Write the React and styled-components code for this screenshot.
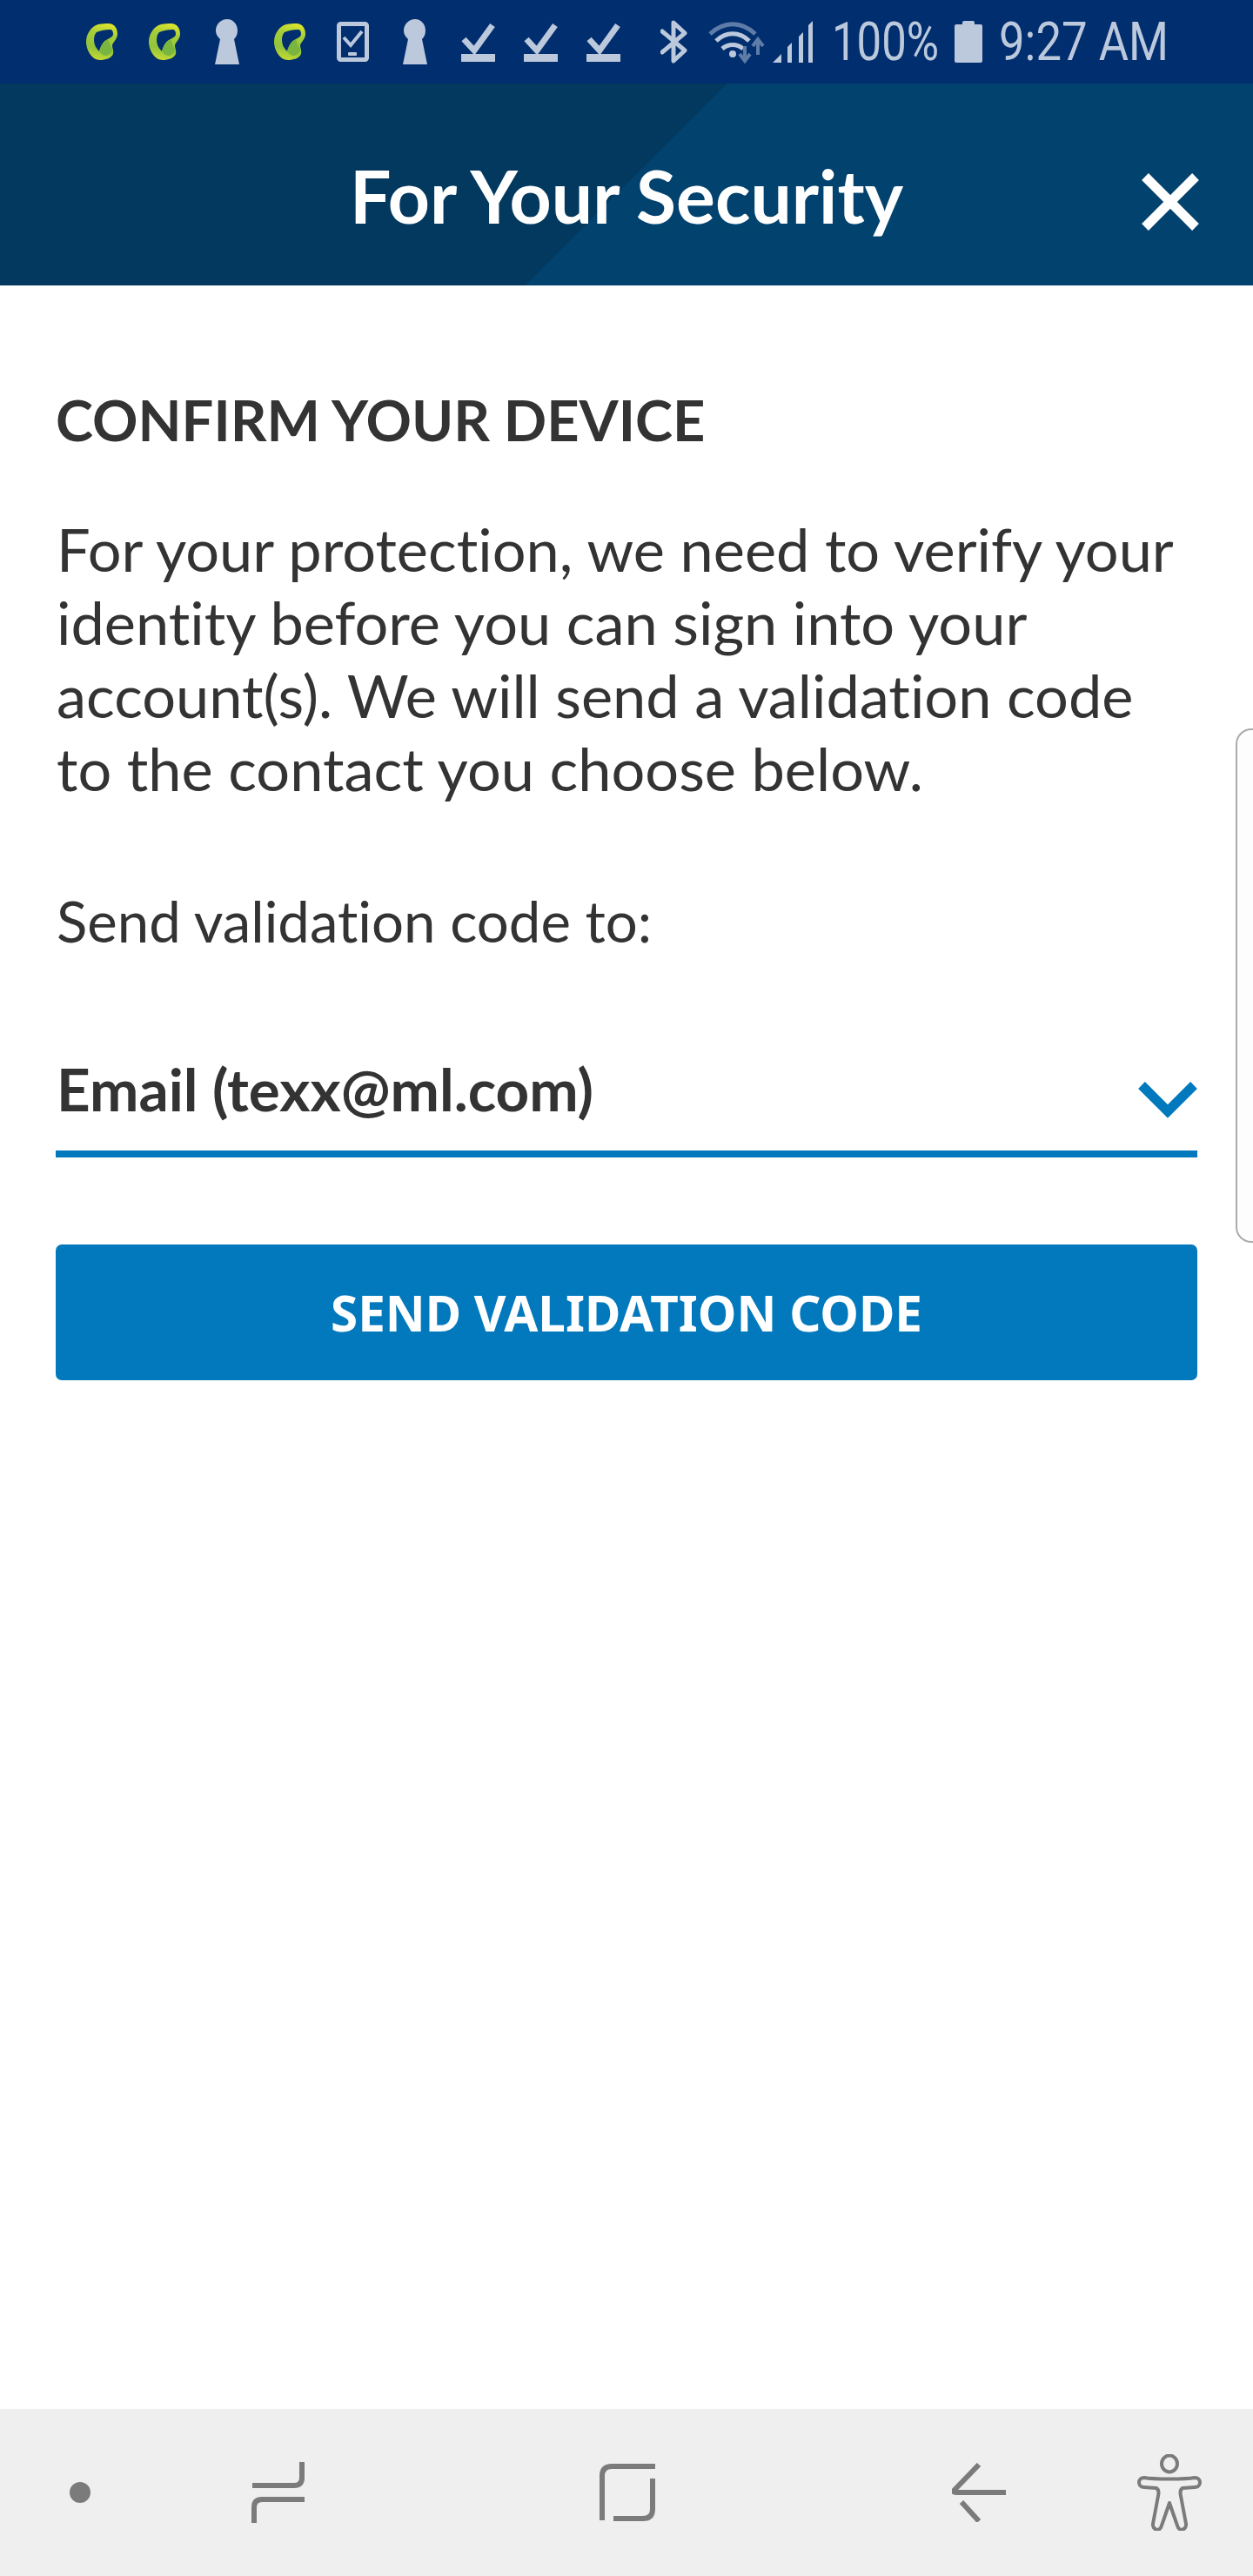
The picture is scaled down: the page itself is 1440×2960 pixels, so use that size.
import React from 'react';
import styled, { createGlobalStyle } from 'styled-components';

const GlobalStyle = createGlobalStyle`
  html, body {
    margin: 0;
    padding: 0;
    background: #ffffff;
  }
  * {
    box-sizing: border-box;
  }
`;

const Page = styled.div`
  position: relative;
  width: 1440px;
  height: 2960px;
  display: flex;
  flex-direction: column;
  background: #ffffff;
  font-family: Lato, 'Liberation Sans', sans-serif;
  font-variant-ligatures: none;
  color: #333333;
  overflow: hidden;
`;

const StatusBar = styled.div`
  height: 96px;
  flex: none;
  display: flex;
  justify-content: space-between;
  align-items: center;
  padding: 0 100px 0 81px;
  background: #012e6e;
  color: #bcc8dc;
`;

const NotificationIcons = styled.div`
  display: grid;
  grid-template-columns: repeat(9, 72px);
  align-items: center;
  justify-items: center;
`;

const SystemIcons = styled.div`
  display: flex;
  align-items: center;
`;

const BluetoothSvg = styled.svg`
  width: 31px;
  height: 50px;
  margin-right: 24px;
`;

const StatusText = styled.span`
  display: block;
  width: ${(p) => p.$width}px;
  margin: 0 ${(p) => p.$after || 0}px 0 ${(p) => p.$before || 0}px;
  font-family: Roboto, sans-serif;
  font-size: 62px;
  line-height: 62px;
  white-space: nowrap;
  transform: scaleX(${(p) => p.$squeeze});
  transform-origin: left center;
`;

const Header = styled.header`
  position: relative;
  height: 232px;
  flex: none;
  display: flex;
  align-items: center;
  justify-content: center;
  background: linear-gradient(135deg, #03395f 0, #03395f 591px, #02426e 591px);
`;

const Title = styled.h1`
  margin: 26px 0 0 0;
  font-size: 84px;
  line-height: 90px;
  font-weight: 700;
  color: #ffffff;
`;

const CloseButton = styled.button`
  position: absolute;
  right: 60px;
  top: 101px;
  width: 70px;
  height: 70px;
  padding: 0;
  border: 0;
  background: none;
`;

const Content = styled.main`
  flex: 1;
  padding: 118px 64px 0 64px;
`;

const Heading = styled.h2`
  margin: 0;
  font-size: 65px;
  line-height: 72px;
  font-weight: 700;
  color: #333333;
`;

const Paragraph = styled.p`
  margin: 71px 0 0 1px;
  font-size: 68.5px;
  line-height: 84px;
  font-weight: 400;
  color: #333333;
`;

const FieldLabel = styled.div`
  margin: 91px 0 0 1px;
  font-size: 65.3px;
  line-height: 84px;
  color: #333333;
`;

const SelectRow = styled.div`
  margin-top: 115px;
  height: 115px;
  display: flex;
  align-items: flex-start;
  justify-content: space-between;
  border-bottom: 8px solid #0279bd;
`;

const SelectValue = styled.span`
  margin-left: 1px;
  font-size: 67.4px;
  line-height: 72px;
  font-weight: 700;
  color: #333333;
`;

const Chevron = styled.svg`
  margin-top: 26px;
  width: 68px;
  height: 46px;
`;

const SendButton = styled.button`
  display: block;
  width: 100%;
  height: 156px;
  margin-top: 100px;
  padding: 0;
  border: 0;
  border-radius: 7px;
  background: #0279bd;
  color: #ffffff;
  font-family: 'Noto Sans', sans-serif;
  font-size: 56.5px;
  font-weight: 700;
  text-transform: uppercase;
`;

const NavBar = styled.nav`
  height: 192px;
  flex: none;
  display: grid;
  grid-template-columns: 184px 271px 532px 275px 163px;
  align-items: center;
  justify-items: center;
  background: #efefef;
  color: #7b7b7b;
`;

const EdgeHandle = styled.div`
  position: absolute;
  top: 837px;
  right: 0;
  width: 20px;
  height: 591px;
  border: 2px solid #ababab;
  border-right: 0;
  border-radius: 18px 0 0 18px;
  background: #fdfdfd;
`;

const LeafIcon = () => (
  <svg width="36" height="42" viewBox="0 0 36 42">
    <defs>
      <linearGradient id="leaf" x1="0.6" y1="0" x2="0.4" y2="1">
        <stop offset="0" stopColor="#dbe52d" />
        <stop offset="0.3" stopColor="#a5cd39" />
        <stop offset="0.7" stopColor="#93c43c" />
        <stop offset="1" stopColor="#c6db31" />
      </linearGradient>
    </defs>
    <path
      fill="url(#leaf)"
      fillRule="evenodd"
      d="M26 0C32 0 36 5 36 12C36 18 31 21 30 25C30 29 32 30 31 35C29 40 22 42 16 42C7 42 0 31 0 21C0 12 6 3 14 1C18 0 22 0 26 0ZM12 10C17 8 22 7 27 7C30 7 31 9 31 12C31 15 28 16 25 18C20 20 17 25 15 32C11 28 9 24 9 19C9 15 10 12 12 10Z"
    />
    <path fill="#79b53f" d="M15 32C17 25 20 20 25 18C27 23 28 27 30 29C30 33 27 36 23 37C20 37 17 35 15 32Z" />
  </svg>
);

const KeyholeIcon = () => (
  <svg width="28" height="52" viewBox="0 0 28 52">
    <path
      fill="currentColor"
      d="M14 0C21 0 26 6 26 13C26 18 24 21 22 23L28 52H0L6 23C4 21 1 18 1 13C1 6 7 0 14 0Z"
    />
  </svg>
);

const PhoneCheckIcon = () => (
  <svg width="37" height="46" viewBox="0 0 37 46">
    <rect x="2.5" y="2.5" width="32" height="41" rx="2" fill="none" stroke="currentColor" strokeWidth="5" />
    <path d="M8 18L16 27L29 11" fill="none" stroke="currentColor" strokeWidth="4" />
    <rect x="13" y="35" width="10" height="4" rx="1" fill="currentColor" />
  </svg>
);

const DownloadDoneIcon = () => (
  <svg width="39" height="46" viewBox="0 0 39 46">
    <path d="M3 20L15 33L36 4" fill="none" stroke="currentColor" strokeWidth="7" />
    <rect x="0" y="37" width="39" height="9" fill="currentColor" />
  </svg>
);

const BluetoothIcon = () => (
  <BluetoothSvg viewBox="0 0 31 50">
    <path
      d="M2 13L28 35L15 47V3L28 15L2 37"
      fill="none"
      stroke="currentColor"
      strokeWidth="5"
      strokeLinejoin="round"
      strokeLinecap="round"
    />
  </BluetoothSvg>
);

const WifiIcon = () => (
  <svg width="74" height="50" viewBox="0 0 74 50">
    <path d="M2 16C18 1 38 1 54 16" fill="none" stroke="#5f7ca8" strokeWidth="5" />
    <path d="M9 24C20 13 36 13 47 24" fill="none" stroke="currentColor" strokeWidth="5" />
    <path d="M16 33C23 27 33 27 40 33" fill="none" stroke="currentColor" strokeWidth="5" />
    <circle cx="28" cy="39" r="4" fill="currentColor" />
    <path d="M42 30V44M36 39L42 47L48 39" fill="none" stroke="#5f7ca8" strokeWidth="4" />
    <path d="M57 40V24M51 30L57 22L63 30" fill="none" stroke="#5f7ca8" strokeWidth="4" />
  </svg>
);

const SignalIcon = () => (
  <svg width="46" height="48" viewBox="0 0 46 48">
    <path fill="currentColor" d="M0 48L10 38V48Z" />
    <path fill="currentColor" d="M17 48V30L22 25V48Z" />
    <path fill="currentColor" d="M30 48V18L35 13V48Z" />
    <path fill="currentColor" d="M41 48V5L46 0V48Z" />
  </svg>
);

const BatteryIcon = () => (
  <svg width="32" height="48" viewBox="0 0 32 48">
    <path
      fill="currentColor"
      d="M9 2Q9 0 11 0H21Q23 0 23 2V4H30Q32 4 32 6V46Q32 48 30 48H2Q0 48 0 46V6Q0 4 2 4H9Z"
    />
  </svg>
);

const App = () => {
  return (
    <Page>
      <GlobalStyle />
      <StatusBar>
        <NotificationIcons>
          <LeafIcon />
          <LeafIcon />
          <KeyholeIcon />
          <LeafIcon />
          <PhoneCheckIcon />
          <KeyholeIcon />
          <DownloadDoneIcon />
          <DownloadDoneIcon />
          <DownloadDoneIcon />
        </NotificationIcons>
        <SystemIcons>
          <BluetoothIcon />
          <WifiIcon />
          <SignalIcon />
          <StatusText $width={122} $squeeze={0.82} $before={22} $after={19}>
            100%
          </StatusText>
          <BatteryIcon />
          <StatusText $width={192} $squeeze={0.85} $before={19}>
            9:27 AM
          </StatusText>
        </SystemIcons>
      </StatusBar>

      <Header>
        <Title>For Your Security</Title>
        <CloseButton aria-label="Close">
          <svg width="70" height="70" viewBox="0 0 70 70">
            <path d="M6 6L64 64M64 6L6 64" fill="none" stroke="#ffffff" strokeWidth="11" />
          </svg>
        </CloseButton>
      </Header>

      <Content>
        <Heading>CONFIRM YOUR DEVICE</Heading>
        <Paragraph>
          For your protection, we need to verify your
          <br />
          identity before you can sign into your
          <br />
          account(s). We will send a validation code
          <br />
          to the contact you choose below.
        </Paragraph>
        <FieldLabel>Send validation code to:</FieldLabel>
        <SelectRow>
          <SelectValue>Email (texx@ml.com)</SelectValue>
          <Chevron viewBox="0 0 68 46">
            <path d="M4 6L34 36L64 6" fill="none" stroke="#0279bd" strokeWidth="11" />
          </Chevron>
        </SelectRow>
        <SendButton>Send validation code</SendButton>
      </Content>

      <NavBar>
        <svg width="24" height="24" viewBox="0 0 24 24">
          <circle cx="12" cy="12" r="12" fill="currentColor" />
        </svg>
        <svg width="62" height="70" viewBox="0 0 62 70">
          <path
            d="M58 0V18Q58 27 49 27H1M61 43H12Q3 43 3 52V70"
            fill="none"
            stroke="currentColor"
            strokeWidth="6"
          />
        </svg>
        <svg width="64" height="66" viewBox="0 0 64 66">
          <path
            d="M3 65V14Q3 3 14 3H64M61 17V52Q61 63 50 63H16"
            fill="none"
            stroke="currentColor"
            strokeWidth="6"
          />
        </svg>
        <svg width="62" height="68" viewBox="0 0 62 68">
          <path
            d="M31 2L3 31Q0 34 5 34H62M11 45L31 67"
            fill="none"
            stroke="currentColor"
            strokeWidth="6"
          />
        </svg>
        <svg width="74" height="88" viewBox="0 0 74 88">
          <ellipse cx="37" cy="11" rx="9" ry="9.5" fill="none" stroke="currentColor" strokeWidth="4" />
          <path
            d="M8 27C19 29 55 29 66 27C74 27 74 38 66 38L52 39C49 41 49 44 50 48L56 80C57 87 48 90 46 82L37 56L28 82C26 90 17 87 18 80L24 48C25 44 25 41 22 39L8 38C0 38 0 27 8 27Z"
            fill="none"
            stroke="currentColor"
            strokeWidth="4"
            strokeLinejoin="round"
          />
        </svg>
      </NavBar>

      <EdgeHandle />
    </Page>
  );
};

export default App;
